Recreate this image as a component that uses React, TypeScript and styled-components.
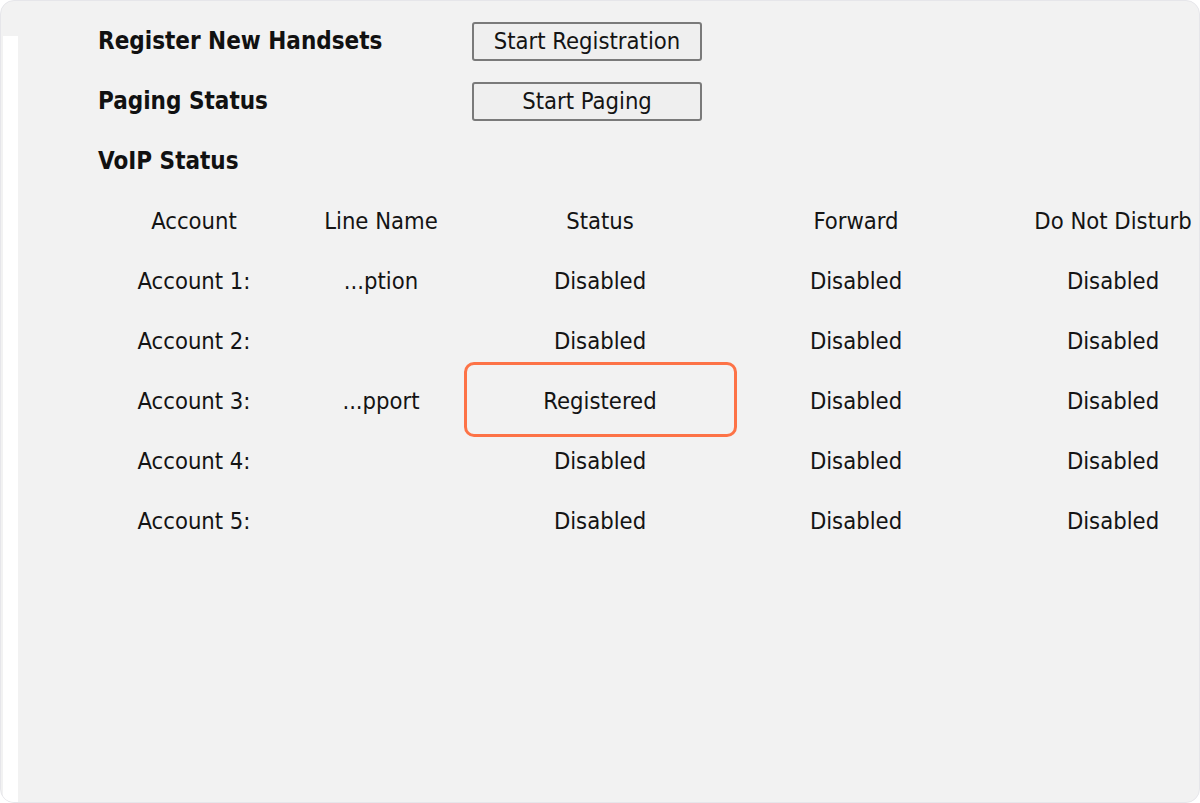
import React from "react";
import styled, { createGlobalStyle } from "styled-components";

const Global = createGlobalStyle`
  html, body { margin: 0; padding: 0; background: #ffffff; }
  body { font-family: "DejaVu Sans Condensed", "DejaVu Sans", sans-serif; }
  * { box-sizing: border-box; }
`;

const Frame = styled.div`
  position: relative;
  width: 1200px;
  height: 803px;
  overflow: hidden;
  background: #f2f2f2;
  border: 1px solid #e6e6ea;
  border-radius: 14px;
  display: flex;
`;

const SideStrip = styled.div`
  flex: 0 0 15px;
  margin: 35px 0 0 2px;
  background: #ffffff;
`;

const Content = styled.div`
  flex: 1;
  padding: 10px 0 0 80px;
  display: flex;
  flex-direction: column;
  color: #141414;
  font-size: 23.6px;
`;

const SectionRow = styled.div`
  display: grid;
  grid-template-columns: 374px 230px;
  align-items: center;
  height: 60px;
`;

const Label = styled.div`
  font-weight: bold;
  font-size: 24px;
  color: #111;
  margin-top: -1px;
`;

const Button = styled.button`
  width: 230px;
  height: 39px;
  font-family: inherit;
  font-size: 23.6px;
  color: #141414;
  background: #efefef;
  border: 2px solid #7a7a7a;
  border-radius: 3px;
  padding: 0;
`;

const Table = styled.div`
  display: grid;
  grid-template-columns: 192px 182px 256px 256px 258px;
  width: max-content;
`;

const Cell = styled.div`
  position: relative;
  height: 60px;
  display: flex;
  align-items: center;
  justify-content: center;
  white-space: nowrap;
  color: #141414;
`;

const Highlight = styled.div`
  position: absolute;
  left: -8px;
  right: -9px;
  top: -9px;
  bottom: -6px;
  border: 3px solid #fd7347;
  border-radius: 10px;
  pointer-events: none;
`;

const heads = ["Account", "Line Name", "Status", "Forward", "Do Not Disturb"];
const rows = [
  ["Account 1:", "...ption", "Disabled", "Disabled", "Disabled"],
  ["Account 2:", "", "Disabled", "Disabled", "Disabled"],
  ["Account 3:", "...pport", "Registered", "Disabled", "Disabled"],
  ["Account 4:", "", "Disabled", "Disabled", "Disabled"],
  ["Account 5:", "", "Disabled", "Disabled", "Disabled"],
];

export default function App() {
  return (
    <>
      <Global />
      <Frame>
        <SideStrip />
        <Content>
          <SectionRow>
            <Label>Register New Handsets</Label>
            <Button>Start Registration</Button>
          </SectionRow>
          <SectionRow>
            <Label>Paging Status</Label>
            <Button>Start Paging</Button>
          </SectionRow>
          <SectionRow>
            <Label>VoIP Status</Label>
          </SectionRow>
          <Table>
            {heads.map((h) => (
              <Cell key={h}>{h}</Cell>
            ))}
            {rows.map((r, i) =>
              r.map((c, j) => (
                <Cell key={`${i}-${j}`}>
                  {c}
                  {c === "Registered" && <Highlight />}
                </Cell>
              ))
            )}
          </Table>
        </Content>
      </Frame>
    </>
  );
}
